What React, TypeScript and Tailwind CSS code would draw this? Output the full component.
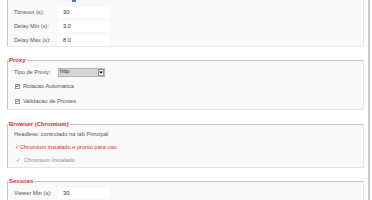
import React from 'react'

const font = "font-['Liberation_Sans',Arial,'DejaVu_Sans',sans-serif]"

function Title({ text }: { text: string }) {
  return (
    <div className="absolute left-0 top-[-4px] px-[1px] bg-[#fcfcfc] text-[6px] leading-[7px] font-bold text-[#e3262e] whitespace-nowrap">
      {text}
    </div>
  )
}

function Entry({ label, value }: { label: string; value: string }) {
  return (
    <div className="flex items-center h-[14px]">
      <div className="w-[44px] text-[5.7px] text-[#555] whitespace-nowrap">{label}</div>
      <div className="w-[52px] h-[11px] bg-white pl-[5px] flex items-center text-[5.7px] text-[#333]">{value}</div>
    </div>
  )
}

function Check({ label, extra }: { label: string; extra?: string }) {
  return (
    <div className={`flex items-center h-[14px] ${extra || ''}`}>
      <div className="ml-[1px] w-[5px] h-[5px] border border-[#9a9a9a] bg-white flex items-center justify-center">
        <svg width="4" height="4" viewBox="0 0 4 4">
          <path d="M0.4 2 L1.5 3.2 L3.6 0.6" fill="none" stroke="#222" strokeWidth="0.9" />
        </svg>
      </div>
      <div className="ml-[3px] text-[5.7px] text-[#555] whitespace-nowrap">{label}</div>
    </div>
  )
}

const groupCls =
  'relative border border-[#c4c4c4] border-r-[#e6e6e6] border-b-[#e6e6e6] bg-[#f9f9f9] pl-[6px]'

export default function App() {
  return (
    <div className={`w-[372px] h-[200px] overflow-hidden bg-white flex ${font}`}>
      <div className="w-[364px] pl-[7px] flex flex-col shrink-0">
        {/* network timing group, continues from above */}
        <div className="h-[47px] shrink-0 bg-[#f9f9f9] border-l border-l-[#c8c8c8] border-r border-r-[#e6e6e6] border-b border-b-[#ececec] pl-[6px]">
          <div className="h-[2px] w-[4px] ml-[58px] bg-[#3b7ddd]" />
          <div className="mt-[3px]">
            <Entry label="Timeout (s):" value="30" />
            <Entry label="Delay Min (s):" value="3.0" />
            <Entry label="Delay Max (s):" value="8.0" />
          </div>
        </div>

        {/* Proxy */}
        <div className={`${groupCls} mt-[13px] pt-[4px] pb-[1px] shrink-0`}>
          <Title text="Proxy" />
          <div className="flex items-center h-[14px]">
            <div className="w-[44px] text-[5.7px] text-[#555] whitespace-nowrap">Tipo de Proxy:</div>
            <div className="w-[47px] h-[9px] bg-[#d6d6d6] border border-[#b4b4b4] flex items-center justify-between">
              <span className="pl-[1px] text-[5.7px] text-[#333] leading-none">http</span>
              <div className="w-[6px] h-[7px] bg-white border border-[#999] flex items-center justify-center">
                <svg width="4" height="3" viewBox="0 0 4 3">
                  <path d="M0 0.5 H4 L2 2.8 Z" fill="#111" />
                </svg>
              </div>
            </div>
          </div>
          <Check label="Rotacao Automatica" />
          <Check label="Validacao de Proxies" extra="mt-px" />
        </div>

        {/* Browser */}
        <div className={`${groupCls} mt-[14px] pt-[3px] shrink-0`}>
          <Title text="Browser (Chromium)" />
          <div className="flex items-center h-[13px] text-[5.7px] text-[#555] whitespace-nowrap">
            Headless: controlado na tab Principal
          </div>
          <div className="flex items-center h-[13px] text-[5.7px] text-[#e3262e] whitespace-nowrap">
            <span className="ml-[1px] w-[5px]">✓</span>
            <span>Chromium instalado e pronto para uso</span>
          </div>
          <div className="flex items-center h-[13px] text-[5.7px] text-[#8c8c8c] whitespace-nowrap">
            <span className="ml-[2px] w-[8px]">✓</span>
            <span>Chromium Instalado</span>
          </div>
        </div>

        {/* Sessoes */}
        <div className={`${groupCls} mt-[13px] pt-[4px] h-[60px] shrink-0`}>
          <Title text="Sessoes" />
          <Entry label="Viewer Min (s):" value="30" />
        </div>
      </div>
      <div className="w-[4px] shrink-0" />
      <div className="w-[2px] shrink-0 bg-[#c8c8c8]" />
    </div>
  )
}
